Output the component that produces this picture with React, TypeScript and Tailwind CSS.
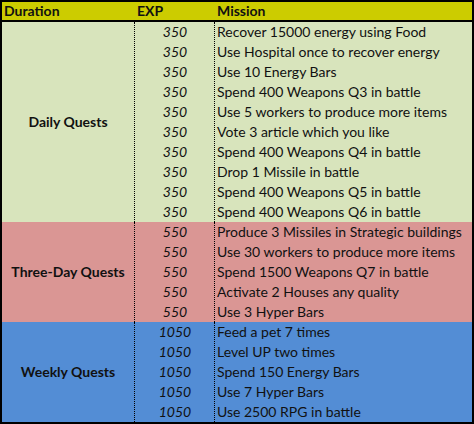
import React from "react";

type Group = { label: string; exp: string; bg: string; missions: string[] };

const groups: Group[] = [
  {
    label: "Daily Quests",
    exp: "350",
    bg: "bg-[#d8e4bc]",
    missions: [
      "Recover 15000 energy using Food",
      "Use Hospital once to recover energy",
      "Use 10 Energy Bars",
      "Spend 400 Weapons Q3 in battle",
      "Use 5 workers to produce more items",
      "Vote 3 article which you like",
      "Spend 400 Weapons Q4 in battle",
      "Drop 1 Missile in battle",
      "Spend 400 Weapons Q5 in battle",
      "Spend 400 Weapons Q6 in battle",
    ],
  },
  {
    label: "Three-Day Quests",
    exp: "550",
    bg: "bg-[#da9694]",
    missions: [
      "Produce 3 Missiles in Strategic buildings",
      "Use 30 workers to produce more items",
      "Spend 1500 Weapons Q7 in battle",
      "Activate 2 Houses any quality",
      "Use 3 Hyper Bars",
    ],
  },
  {
    label: "Weekly Quests",
    exp: "1050",
    bg: "bg-[#538dd5]",
    missions: [
      "Feed a pet 7 times",
      "Level UP two times",
      "Spend 150 Energy Bars",
      "Use 7 Hyper Bars",
      "Use 2500 RPG in battle",
    ],
  },
];

export default function App() {
  return (
    <div
      className="w-[474px] h-[424px] bg-black p-[2px] text-[#111] text-[14px] leading-[20px]"
      style={{ fontFamily: "Lato, 'Open Sans', sans-serif" }}
    >
      <div className="h-[18px] bg-[#cccc00] grid grid-cols-[132px_80px_1fr] font-bold leading-[18px]">
        <div className="pl-[2px]">Duration</div>
        <div className="pl-[3px]">EXP</div>
        <div className="pl-[3px]">Mission</div>
      </div>
      <div className="h-[2px] bg-black" />
      {groups.map((g) => (
        <div key={g.label} className={`${g.bg} grid grid-cols-[132px_80px_1fr]`}>
          <div className="flex items-center justify-center font-bold">{g.label}</div>
          <div className="border-l border-dotted border-black">
            {g.missions.map((_, i) => (
              <div key={i} className="h-[20px] text-center italic pl-[1px]">
                {g.exp}
              </div>
            ))}
          </div>
          <div className="border-l border-dotted border-black">
            {g.missions.map((m, i) => (
              <div key={i} className="h-[20px] pl-[2px] whitespace-nowrap">
                {m}
              </div>
            ))}
          </div>
        </div>
      ))}
    </div>
  );
}
